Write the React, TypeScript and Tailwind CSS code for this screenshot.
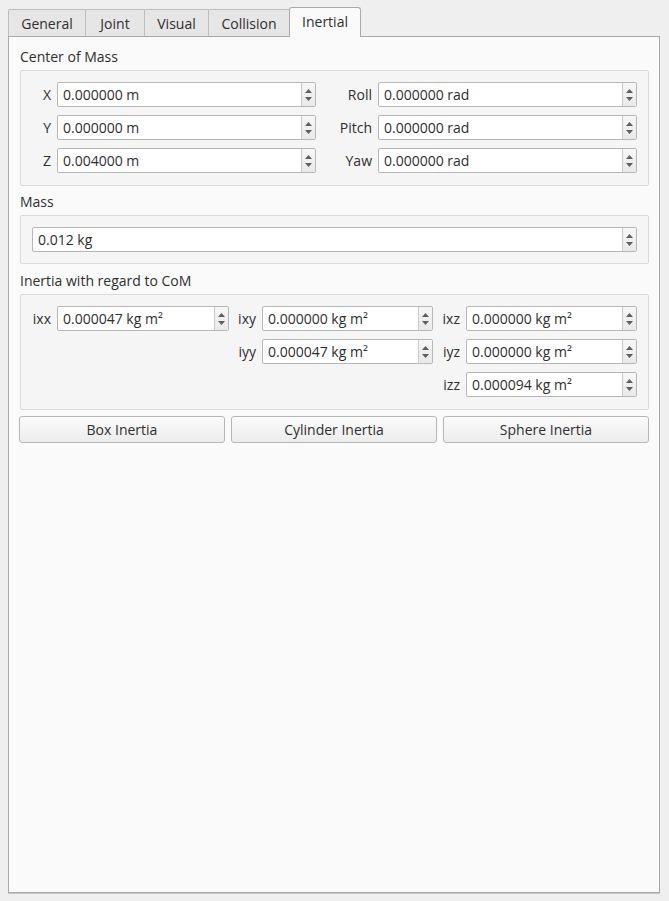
import React from "react";

const font = { fontFamily: '"Open Sans", "Noto Sans", sans-serif' };

function Arrows() {
  return (
    <div className="flex w-[14px] flex-col items-center justify-center gap-[4px] rounded-r-[2px] border-l border-[#c9c9c9] bg-gradient-to-b from-[#f7f7f7] to-[#e9e9e9]">
      <svg width="7" height="4" viewBox="0 0 7 4">
        <path d="M3.5 0 L7 4 L0 4 Z" fill="#5e5e5e" />
      </svg>
      <svg width="7" height="4" viewBox="0 0 7 4">
        <path d="M0 0 L7 0 L3.5 4 Z" fill="#5e5e5e" />
      </svg>
    </div>
  );
}

function Spin({ value }: { value: string }) {
  return (
    <div className="flex h-[25px] w-full rounded-[2px] border border-[#b7b7b7] bg-white">
      <div className="flex-1 truncate pl-[5px] text-[14px] leading-[23px] text-[#2f2f2f]">
        {value}
      </div>
      <Arrows />
    </div>
  );
}

function Label({ text }: { text: string }) {
  return (
    <div className="pr-[6px] text-right text-[14px] leading-[25px] text-[#2f2f2f]">
      {text}
    </div>
  );
}

function Title({ text, className }: { text: string; className: string }) {
  return (
    <div className={`text-[14px] leading-[16px] text-[#2f2f2f] ${className}`}>
      {text}
    </div>
  );
}

const tabs = [
  { name: "General", w: "w-[78px]" },
  { name: "Joint", w: "w-[60px]" },
  { name: "Visual", w: "w-[65px]" },
  { name: "Collision", w: "w-[82px]" },
];

export default function App() {
  return (
    <div
      className="flex h-[901px] w-[669px] flex-col bg-[#efefef] pl-[8px] pr-[9px] pt-[7px] pb-[8px]"
      style={font}
    >
      {/* Tab bar */}
      <div className="flex h-[29px] items-end">
        {tabs.map((t, i) => (
          <div
            key={t.name}
            className={`${t.w} ${i > 0 ? "-ml-px" : ""} flex h-[27px] items-center justify-center rounded-t-[2px] border border-b-0 border-[#bdbdbd] bg-[#e6e6e6] text-[14px] text-[#2f2f2f]`}
          >
            {t.name}
          </div>
        ))}
        <div className="relative z-10 -mb-px -ml-px flex h-[30px] w-[72px] items-center justify-center rounded-t-[3px] border border-b-0 border-[#a9a9a9] bg-[#fafafa] pb-[2px] text-[14px] text-[#2f2f2f]">
          Inertial
        </div>
      </div>

      {/* Pane */}
      <div className="flex flex-1 flex-col border border-[#a9a9a9] bg-[#fafafa] pl-[11px] pr-[10px] pt-[12px] shadow-[0_1px_0_#c8c8c8]">
        <Title text="Center of Mass" className="mb-[5px]" />
        <div className="rounded-[2px] border border-[#dadada] bg-[#f5f5f5] pt-[11px] pb-[12px]">
          <div className="grid grid-cols-[36px_259px_62px_259px] gap-y-[8px]">
            <Label text="X" />
            <Spin value="0.000000 m" />
            <Label text="Roll" />
            <Spin value="0.000000 rad" />
            <Label text="Y" />
            <Spin value="0.000000 m" />
            <Label text="Pitch" />
            <Spin value="0.000000 rad" />
            <Label text="Z" />
            <Spin value="0.004000 m" />
            <Label text="Yaw" />
            <Spin value="0.000000 rad" />
          </div>
        </div>

        <Title text="Mass" className="mt-[8px] mb-[5px]" />
        <div className="rounded-[2px] border border-[#dadada] bg-[#f5f5f5] px-[11px] pt-[11px] pb-[11px]">
          <Spin value="0.012 kg" />
        </div>

        <Title text="Inertia with regard to CoM" className="mt-[9px] mb-[5px]" />
        <div className="rounded-[2px] border border-[#dadada] bg-[#f5f5f5] pt-[11px] pb-[12px]">
          <div className="grid grid-cols-[36px_172px_33px_171px_33px_171px] gap-y-[8px]">
            <Label text="ixx" />
            <Spin value="0.000047 kg m²" />
            <Label text="ixy" />
            <Spin value="0.000000 kg m²" />
            <Label text="ixz" />
            <Spin value="0.000000 kg m²" />

            <div />
            <div />
            <Label text="iyy" />
            <Spin value="0.000047 kg m²" />
            <Label text="iyz" />
            <Spin value="0.000000 kg m²" />

            <div />
            <div />
            <div />
            <div />
            <Label text="izz" />
            <Spin value="0.000094 kg m²" />
          </div>
        </div>

        <div className="-ml-px mt-[6px] flex w-[630px] gap-[6px]">
          {["Box Inertia", "Cylinder Inertia", "Sphere Inertia"].map((b) => (
            <button
              key={b}
              className="h-[27px] flex-1 rounded-[3px] border border-[#b6b6b6] bg-gradient-to-b from-[#fbfbfb] to-[#ececec] text-[14px] text-[#2f2f2f]"
            >
              {b}
            </button>
          ))}
        </div>
      </div>
    </div>
  );
}
